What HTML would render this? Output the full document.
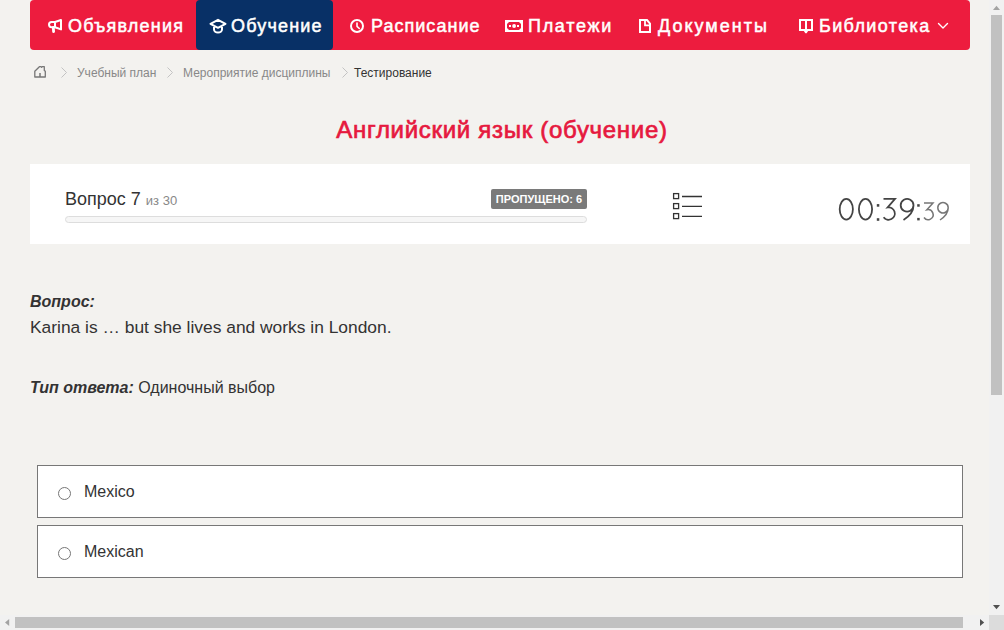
<!DOCTYPE html>
<html><head><meta charset="utf-8">
<style>
html,body{margin:0;padding:0;width:1004px;height:630px;overflow:hidden;background:#f3f2ef;font-family:"Liberation Sans",sans-serif;color:#333;}
#nav{position:absolute;left:30px;top:0;width:940px;height:50px;background:#ed1c3e;border-radius:4px;}
.ni{position:absolute;top:1px;height:50px;line-height:50px;color:#fff;font-size:18px;font-weight:normal;-webkit-text-stroke:0.5px #fff;white-space:nowrap;}
#act{position:absolute;left:166px;top:0;width:137px;height:50px;background:#083066;border-radius:4px;}
.bc{position:absolute;top:66px;font-size:12px;color:#888;white-space:nowrap;line-height:15px;}
#title{position:absolute;left:0;width:1004px;top:115px;text-align:center;color:#e6193e;font-size:24px;font-weight:normal;-webkit-text-stroke:0.7px #e6193e;letter-spacing:0.7px;line-height:30px;}
#card{position:absolute;left:30px;top:164px;width:940px;height:80px;background:#fff;}
#vopr{position:absolute;left:35px;top:25px;font-size:18px;color:#333;white-space:nowrap;}
#vopr small{font-size:13px;color:#888;}
#bar{position:absolute;left:35px;top:52px;width:520px;height:5px;border:1px solid #ddd;border-radius:4px;background:#f6f6f6;}
#badge{position:absolute;left:461px;top:25px;width:96px;height:20px;background:#7a7a7a;color:#fff;font-size:11px;font-weight:bold;line-height:20px;text-align:center;border-radius:2px;}
.q{position:absolute;left:30px;font-size:16px;white-space:nowrap;color:#333;}
.opt{position:absolute;left:37px;width:924px;height:51px;border:1px solid #777;background:#fff;}
.opt .r{position:absolute;left:20px;top:21px;width:11px;height:11px;border:1px solid #767676;border-radius:50%;background:#fff;}
.opt .t{position:absolute;left:46px;top:17px;font-size:16px;color:#333;}
#vsb{position:absolute;left:989px;top:0;width:15px;height:615px;background:#f1f1f1;}
#hsb{position:absolute;left:0;top:615px;width:989px;height:15px;background:#f1f1f1;}
#corner{position:absolute;left:989px;top:615px;width:15px;height:15px;background:#dcdcdc;}
#vth{position:absolute;left:991px;top:15px;width:11px;height:380px;background:#c1c1c1;}
#hth{position:absolute;left:15px;top:617px;width:948px;height:11px;background:#c1c1c1;}
svg#ov{position:absolute;left:0;top:0;width:1004px;height:630px;}
</style></head><body>
<div id="nav">
  <div id="act"></div>
  <div class="ni" style="left:38px;letter-spacing:1.20px">Объявления</div>
  <div class="ni" style="left:201px;letter-spacing:1.18px">Обучение</div>
  <div class="ni" style="left:341px;letter-spacing:1.03px">Расписание</div>
  <div class="ni" style="left:498px;letter-spacing:1.71px">Платежи</div>
  <div class="ni" style="left:628px;letter-spacing:2.02px">Документы</div>
  <div class="ni" style="left:789px;letter-spacing:1.37px">Библиотека</div>
</div>
<div class="bc" style="left:77px">Учебный план</div>
<div class="bc" style="left:183px">Мероприятие дисциплины</div>
<div class="bc" style="left:354px;color:#333">Тестирование</div>
<div id="title">Английский язык (обучение)</div>
<div id="card">
  <div id="vopr">Вопрос 7 <small>из 30</small></div>
  <div id="bar"></div>
  <div id="badge">ПРОПУЩЕНО: 6</div>
</div>
<div class="q" style="top:293px;font-weight:bold;font-style:italic">Вопрос:</div>
<div class="q" style="top:316.6px;font-size:17.4px">Karina is … but she lives and works in London.</div>
<div class="q" style="top:379px"><b><i>Тип ответа:</i></b> Одиночный выбор</div>
<div class="opt" style="top:465px"><div class="r"></div><div class="t">Mexico</div></div>
<div class="opt" style="top:525px"><div class="r"></div><div class="t">Mexican</div></div>
<div id="vsb"></div><div id="vth"></div>
<div id="hsb"></div><div id="hth"></div>
<div id="corner"></div>
<svg id="ov" viewBox="0 0 1004 630">
  <g fill="none" stroke="#fff" stroke-width="2" stroke-linejoin="round" stroke-linecap="round">
    <!-- megaphone -->
    <path d="M55 22 H51.6 A2.6 2.6 0 0 0 51.6 27.2 H55 Z M55 22 L61 20 V29.4 L55 27.2 Z"/><path d="M53.3 27.5 L53.6 31.6" stroke-width="2.8"/>
    <!-- grad cap -->
    <path d="M210.5 23.8 L218 19.8 L225.5 23.8 L218 27.8 Z M214 25.8 V29.5 A4 3 0 0 0 222 29.5 V25.8"/>
    <!-- clock -->
    <circle cx="357" cy="26" r="6"/>
    <path d="M357 23 V26.3 L359.3 28.5" stroke-width="1.6"/>
    <!-- doc -->
    <path d="M640 20 H647 L650 23.5 V32 H640 Z" stroke-linejoin="miter"/>
    <path d="M645 20.5 V25.3 H650" stroke-width="1.8" stroke-linejoin="miter" stroke-linecap="butt"/>
    <!-- book -->
    <path d="M800 20 H812 V30 H800 Z M806 20 V32" stroke-linejoin="miter" stroke-linecap="butt"/><path d="M803.5 30.5 H808.5 L806.6 33.2 H805.4 Z" fill="#fff" stroke="none"/>
    <!-- chevron -->
    <path d="M938.5 23.5 L943 28 L947.5 23.5" stroke-width="1.4"/>
  </g>
  <!-- money -->
  <rect x="505" y="20" width="18" height="12" fill="#fff"/>
  <path d="M507 24 L509 22 H519 L521 24 V28 L519 30 H509 L507 28 Z" fill="#ed1c3e"/>
  <circle cx="514.1" cy="26" r="1.9" fill="#fff"/>
  <rect x="509" y="25" width="2" height="2" fill="#fff"/>
  <rect x="517" y="25" width="2" height="2" fill="#fff"/>
  <!-- breadcrumb -->
  <path d="M34.8 77 V71.3 L39.4 66.7 H41 L41.6 67.4 L42.2 66.7 H44.3 V70.4 L45.3 71.3 V77 Z" fill="none" stroke="#777" stroke-width="1.3" stroke-linejoin="round"/>
  <path d="M40 73 V77" stroke="#777" stroke-width="1.5"/>
  <g fill="none" stroke="#c3c3c3" stroke-width="1">
    <path d="M61.5 67.5 L66.5 72.5 L61.5 77.5"/>
    <path d="M167.5 67.5 L172.5 72.5 L167.5 77.5"/>
    <path d="M342.5 67.5 L347.5 72.5 L342.5 77.5"/>
  </g>
  <!-- list icon -->
  <g fill="none" stroke="#333" stroke-width="1.3">
    <rect x="673.6" y="193.6" width="5" height="5"/>
    <rect x="673.6" y="203.6" width="5" height="5"/>
    <rect x="673.6" y="213.6" width="5" height="5"/>
    <path d="M682 196.5 H702 M682 206.4 H702 M682 216.3 H702"/>
  </g>
  <!-- timer -->
  <g fill="none" stroke="#444" stroke-width="1.8">
    <ellipse cx="846.3" cy="209.25" rx="6.6" ry="10.4"/>
    <ellipse cx="865.5" cy="209.25" rx="6.6" ry="10.4"/>
    <path d="M883.5 198.9 H895 L887.6 207.4 A6.2 6.2 0 1 1 883.6 217.2"/>
    <path d="M913.5 205.3 A6.4 6.4 0 1 1 913.5 205.2 M913.5 205.5 C913.5 211.5 909 216.5 903.5 220"/>
  </g>
  <g fill="#444">
    <rect x="876.8" y="204.1" width="2.5" height="2.6"/><rect x="876.8" y="218.2" width="2.5" height="2.6"/>
    <rect x="917.2" y="204.2" width="2.5" height="2.5"/><rect x="917.2" y="217.9" width="2.5" height="2.5"/>
  </g>
  <g fill="none" stroke="#777" stroke-width="1.5">
    <path d="M924 202.9 H933 L926.9 209.8 A5 5 0 1 1 924 217.5"/>
    <path d="M948.2 207.8 A5.2 5.2 0 1 1 948.2 207.7 M948.2 208 C948.2 213 944.5 217 940 220"/>
  </g>
  <!-- scrollbar arrows -->
  <path d="M993 10 L996.5 5.8 L1000 10 Z" fill="#a3a3a3"/>
  <path d="M993 605 L996.5 609.2 L1000 605 Z" fill="#505050"/>
  <path d="M9.2 619 L5 622.5 L9.2 626 Z" fill="#a3a3a3"/>
  <path d="M980 619 L984.2 622.5 L980 626 Z" fill="#505050"/>
</svg>
</body></html>
